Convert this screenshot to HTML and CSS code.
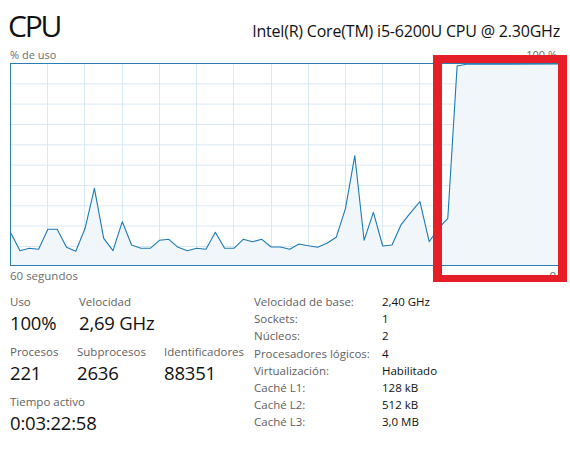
FILE: index.html
```html
<!DOCTYPE html>
<html lang="es">
<head>
<meta charset="utf-8">
<title>CPU</title>
<link rel="stylesheet" href="styles.css">
</head>
<body>
<div class="page">
  <header class="head">
    <h1 class="title">CPU</h1>
    <div class="model">Intel(R) Core(TM) i5-6200U CPU @ 2.30GHz</div>
  </header>

  <div class="axis axis-top"><span>% de uso</span><span>100 %</span></div>

  <div class="graph">
    <svg class="chart" width="549" height="203" viewBox="0 0 549 203" xmlns="http://www.w3.org/2000/svg">
      <g class="grid">
        <line x1="0" y1="20.8" x2="549" y2="20.8"/>
        <line x1="0" y1="41.1" x2="549" y2="41.1"/>
        <line x1="0" y1="61.5" x2="549" y2="61.5"/>
        <line x1="0" y1="81.8" x2="549" y2="81.8"/>
        <line x1="0" y1="102.1" x2="549" y2="102.1"/>
        <line x1="0" y1="122.5" x2="549" y2="122.5"/>
        <line x1="0" y1="142.8" x2="549" y2="142.8"/>
        <line x1="0" y1="163.1" x2="549" y2="163.1"/>
        <line x1="0" y1="183.5" x2="549" y2="183.5"/>
        <line x1="37.5" y1="0" x2="37.5" y2="203"/>
        <line x1="74.5" y1="0" x2="74.5" y2="203"/>
        <line x1="112.5" y1="0" x2="112.5" y2="203"/>
        <line x1="149.5" y1="0" x2="149.5" y2="203"/>
        <line x1="186.5" y1="0" x2="186.5" y2="203"/>
        <line x1="223.5" y1="0" x2="223.5" y2="203"/>
        <line x1="261.5" y1="0" x2="261.5" y2="203"/>
        <line x1="298.5" y1="0" x2="298.5" y2="203"/>
        <line x1="335.5" y1="0" x2="335.5" y2="203"/>
        <line x1="372.5" y1="0" x2="372.5" y2="203"/>
        <line x1="409.5" y1="0" x2="409.5" y2="203"/>
        <line x1="447.5" y1="0" x2="447.5" y2="203"/>
        <line x1="484.5" y1="0" x2="484.5" y2="203"/>
        <line x1="522.5" y1="0" x2="522.5" y2="203"/>
      </g>
      <polygon class="area" points="0,203 0.7,169.7 10,187.7 19.3,185.3 28.6,186.3 37.9,166.3 47.2,166.3 56.5,184.3 65.8,188.3 75.1,165.3 84.4,125.3 93.7,175.3 103,187.7 112.3,158.7 121.6,182 130.9,185.3 140.2,185.3 149.5,177.3 158.8,176.3 168.1,184.3 177.4,187.7 186.7,185.3 196,186.3 205.3,169.3 214.6,185.3 223.9,185.3 233.2,176.3 242.5,178.7 251.8,176.3 261.1,184 270.4,184 279.7,186.3 289,181 298.3,182.7 307.6,184.3 316.9,180.3 326.2,174.3 335.5,145.3 344.8,92.7 354.1,177.3 363.4,149.3 372.7,183 382,182 391.3,161.3 400.6,149.7 409.9,138.7 419.2,178.7 428.5,165.3 437.8,155.3 447.1,3 456.4,1.2 549,1 549,203"/>
      <polyline class="line" points="0.7,169.7 10,187.7 19.3,185.3 28.6,186.3 37.9,166.3 47.2,166.3 56.5,184.3 65.8,188.3 75.1,165.3 84.4,125.3 93.7,175.3 103,187.7 112.3,158.7 121.6,182 130.9,185.3 140.2,185.3 149.5,177.3 158.8,176.3 168.1,184.3 177.4,187.7 186.7,185.3 196,186.3 205.3,169.3 214.6,185.3 223.9,185.3 233.2,176.3 242.5,178.7 251.8,176.3 261.1,184 270.4,184 279.7,186.3 289,181 298.3,182.7 307.6,184.3 316.9,180.3 326.2,174.3 335.5,145.3 344.8,92.7 354.1,177.3 363.4,149.3 372.7,183 382,182 391.3,161.3 400.6,149.7 409.9,138.7 419.2,178.7 428.5,165.3 437.8,155.3 447.1,3 456.4,1.2 549,1"/>
      <rect class="frame" x="0.5" y="0.5" width="548" height="202"/>
    </svg>
  </div>

  <div class="axis axis-bottom"><span>60 segundos</span><span>0</span></div>

  <section class="stats">
    <div class="dynamic">
      <div class="stat-row">
        <div class="stat w-uso"><div class="label">Uso</div><div class="value">100%</div></div>
        <div class="stat"><div class="label">Velocidad</div><div class="value">2,69 GHz</div></div>
      </div>
      <div class="stat-row">
        <div class="stat w-proc"><div class="label">Procesos</div><div class="value">221</div></div>
        <div class="stat w-sub"><div class="label">Subprocesos</div><div class="value">2636</div></div>
        <div class="stat"><div class="label">Identificadores</div><div class="value">88351</div></div>
      </div>
      <div class="stat-row">
        <div class="stat"><div class="label">Tiempo activo</div><div class="value">0:03:22:58</div></div>
      </div>
    </div>

    <dl class="specs">
      <dt>Velocidad de base:</dt><dd>2,40 GHz</dd>
      <dt>Sockets:</dt><dd>1</dd>
      <dt>Núcleos:</dt><dd>2</dd>
      <dt>Procesadores lógicos:</dt><dd>4</dd>
      <dt>Virtualización:</dt><dd>Habilitado</dd>
      <dt>Caché L1:</dt><dd>128 kB</dd>
      <dt>Caché L2:</dt><dd>512 kB</dd>
      <dt>Caché L3:</dt><dd>3,0 MB</dd>
    </dl>
  </section>

  <div class="highlight"></div>
</div>
</body>
</html>
```

FILE: styles.css
```css
* { box-sizing: border-box; }

html, body {
  margin: 0;
  padding: 0;
  background: #ffffff;
}

body {
  font-family: "Open Sans", "Noto Sans", "Liberation Sans", sans-serif;
  color: #1a1a1a;
  width: 570px;
  height: 449px;
  overflow: hidden;
}

.page {
  position: relative;
  padding: 8px 10px 0 10px;
}

.head {
  display: flex;
  justify-content: space-between;
  align-items: baseline;
  height: 38px;
}

.title {
  margin: 0 0 0 -2px;
  font-weight: 400;
  font-size: 30px;
  line-height: 36px;
  letter-spacing: -2.2px;
  color: #111;
}

.model {
  font-size: 16px;
  line-height: 20px;
  letter-spacing: -0.2px;
  color: #111;
}

.axis {
  display: flex;
  justify-content: space-between;
  font-size: 11px;
  color: #6d6d6d;
}

.axis-top {
  height: 17px;
  line-height: 17px;
  padding-right: 3px;
}

.axis-bottom {
  height: 18px;
  line-height: 20px;
  padding-right: 4px;
  font-size: 11.5px;
}

.graph {
  width: 549px;
  height: 203px;
}

.chart {
  display: block;
}

.grid line {
  stroke: #d9e9f4;
  stroke-width: 1;
}

.area {
  fill: #f1f6fb;
}

.line {
  fill: none;
  stroke: #1d7ab5;
  stroke-width: 1.1;
  stroke-linejoin: round;
}

.frame {
  fill: none;
  stroke: #2a7db5;
  stroke-width: 1;
}

.stats {
  display: flex;
  margin-top: 10px;
}

.dynamic {
  width: 244px;
  display: flex;
  flex-direction: column;
  gap: 8px;
}

.stat-row {
  display: flex;
}

.w-uso { width: 69px; }
.w-proc { width: 67px; }
.w-sub { width: 87px; }

.label {
  font-size: 11.5px;
  line-height: 16px;
  color: #5f5f5f;
}

.value {
  font-size: 18.5px;
  line-height: 26px;
  color: #111;
  letter-spacing: -0.2px;
}

.specs {
  margin: -1px 0 0 0;
  display: grid;
  grid-template-columns: 128px auto;
  grid-auto-rows: 17.2px;
  font-size: 11.5px;
  line-height: 17.2px;
}

.specs dt {
  color: #5f5f5f;
}

.specs dd {
  margin: 0;
  color: #111;
}

.highlight {
  position: absolute;
  left: 433px;
  top: 55px;
  width: 134px;
  height: 227px;
  border: 9px solid #e61e28;
  border-top-width: 8px;
  border-bottom-width: 7px;
  pointer-events: none;
}
```
